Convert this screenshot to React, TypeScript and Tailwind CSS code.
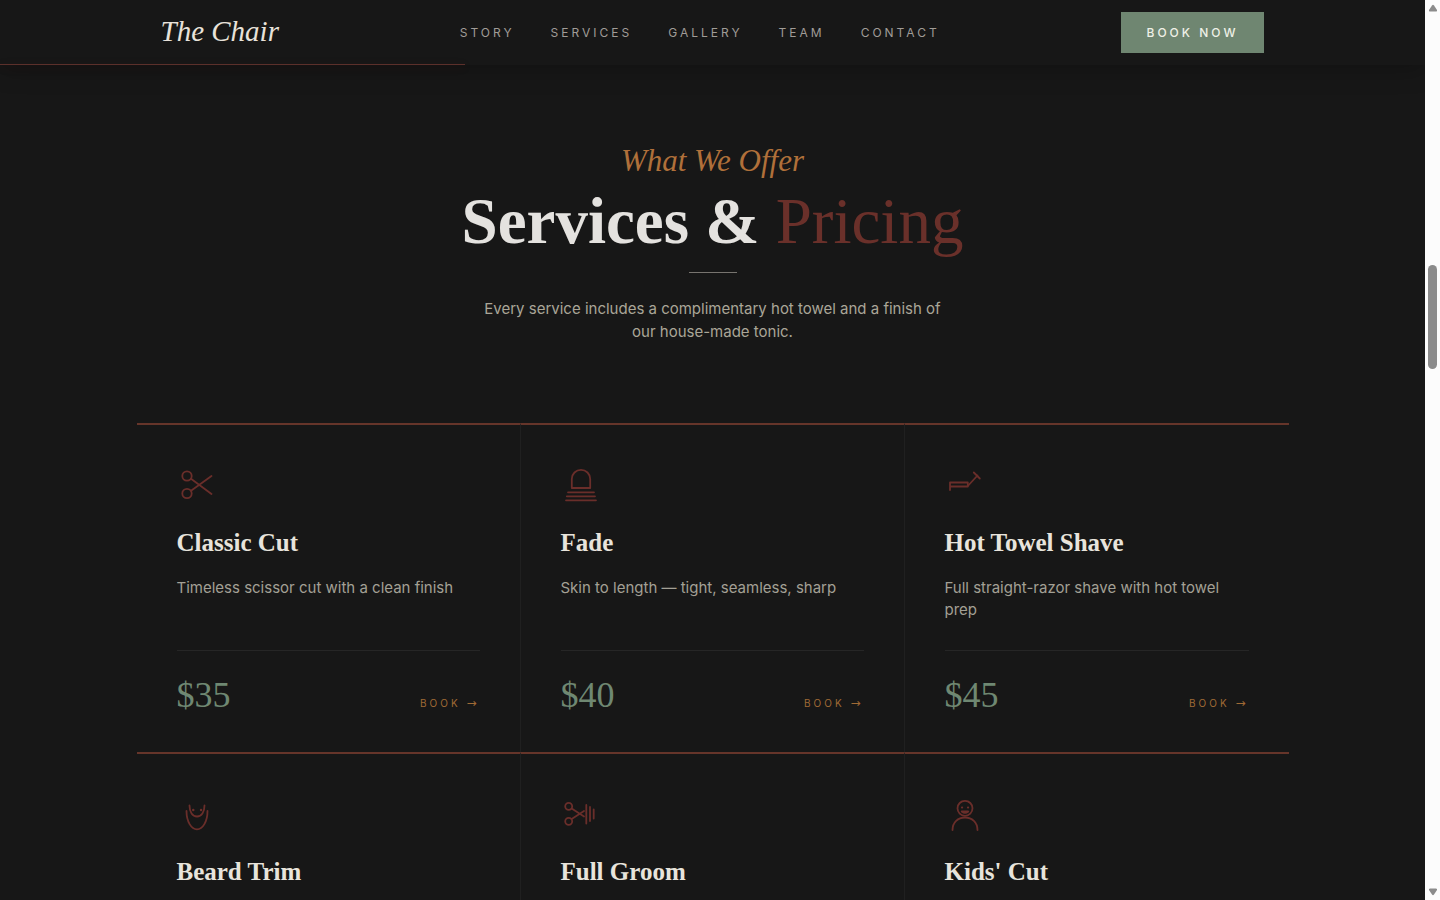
import type { ReactNode } from 'react'

type Service = {
  name: string
  icon: ReactNode
  description?: string
  price?: number
}

const navLinks = ['Story', 'Services', 'Gallery', 'Team', 'Contact']

const scrollProgress = 0.326

const services: Service[] = [
  {
    name: 'Classic Cut',
    description: 'Timeless scissor cut with a clean finish',
    price: 35,
    icon: (
      <>
        <circle cx="10" cy="11" r="4.7" />
        <circle cx="10" cy="28.5" r="4.7" />
        <path d="M14 13.7 34.5 29M14 25.8 34.5 11" />
      </>
    ),
  },
  {
    name: 'Fade',
    description: 'Skin to length — tight, seamless, sharp',
    price: 40,
    icon: (
      <>
        <path d="M10.8 23V14a9.2 9.2 0 0 1 18.4 0v9z" />
        <path d="M7 27.3h26M5.8 31.3h28.2M5 35.3h30" />
      </>
    ),
  },
  {
    name: 'Hot Towel Shave',
    description: 'Full straight-razor shave with hot towel prep',
    price: 45,
    icon: (
      <>
        <path d="M5 25v-7.5h17.8v4H5" />
        <path d="M22.8 21 32.5 10.5M28.8 7.5l6 6" />
      </>
    ),
  },
  {
    name: 'Beard Trim',
    icon: (
      <>
        <path d="M9.5 17c0 10.5 4.8 18.3 10.5 18.3S30.5 27.5 30.5 17" />
        <path d="M12.5 11.5c0 6.5 3 11 7.5 11s7.5-4.5 7.5-11" />
        <path d="M16.2 16h.1M24 16h.1" strokeWidth="2.4" />
      </>
    ),
  },
  {
    name: 'Full Groom',
    icon: (
      <>
        <circle cx="7.7" cy="12.3" r="3.5" />
        <circle cx="7.7" cy="27.3" r="3.5" />
        <path d="M10.7 14.5 23 22.5M10.7 25 23 17" />
        <path d="M25.3 11v18.5M29 13v14M32.7 15.5v9" />
      </>
    ),
  },
  {
    name: "Kids' Cut",
    icon: (
      <>
        <circle cx="20" cy="14.3" r="7.5" />
        <path d="M17 13.5h.1M23 13.5h.1" strokeWidth="2.2" />
        <path d="M16.7 17.5c2 1.6 4.6 1.6 6.6 0z" />
        <path d="M7.5 36c0-7.5 5.5-12.5 12.5-12.5S32.5 28.5 32.5 36" />
      </>
    ),
  },
]

function Header() {
  return (
    <header className="relative z-10 bg-[#171717] shadow-[0_4px_24px_rgba(0,0,0,0.25)]">
      <div className="mx-auto flex h-[65px] max-w-6xl items-center justify-between px-6">
        <a href="#top" className="pb-1 font-['Liberation_Serif',serif] text-[29px] leading-9 text-[#e8e2da] italic">
          The Chair
        </a>
        <nav className="flex items-center gap-9">
          {navLinks.map((label) => (
            <a
              key={label}
              href={`#${label.toLowerCase()}`}
              className="text-xs tracking-[3px] text-[#a09c97] uppercase"
            >
              {label}
            </a>
          ))}
        </nav>
        <button
          type="button"
          className="bg-[#6f8671] px-[26px] py-3 text-xs leading-[17px] font-medium tracking-[3px] text-[#eef0e6] uppercase"
        >
          Book Now
        </button>
      </div>
      <div
        className="absolute bottom-0 left-0 h-px bg-[#5c302b] shadow-[0_2px_8px_rgba(110,20,20,0.3)]"
        style={{ width: `${scrollProgress * 100}%` }}
      />
    </header>
  )
}

function ServiceCard({ service }: { service: Service }) {
  return (
    <article className="flex flex-col border-t-2 border-r border-t-[#66352a] border-r-[#202020] p-10 nth-[3n]:border-r-0">
      <svg
        viewBox="0 0 40 40"
        className="size-10 text-[#6a2e2a]"
        fill="none"
        stroke="currentColor"
        strokeWidth="1.8"
        strokeLinecap="round"
        strokeLinejoin="round"
        aria-hidden="true"
      >
        {service.icon}
      </svg>
      <h3 className="mt-5 font-['Liberation_Serif',serif] text-[25px] leading-9 font-bold text-[#e8e4dc]">
        {service.name}
      </h3>
      {service.description ? (
        <p className="mt-4 min-h-11 flex-1 text-[15px] leading-[22px] text-[#a3a095]">{service.description}</p>
      ) : null}
      {service.price ? (
        <div className="mt-[29px] flex items-baseline justify-between border-t border-[#262626] pt-7">
          <span className="font-['Liberation_Serif',serif] text-4xl leading-[33px] text-[#6f8872]">
            ${service.price}
          </span>
          <a href="#book" className="text-[10px] tracking-[3px] text-[#a06a35] uppercase">
            Book <span className="font-['DejaVu_Sans',sans-serif] text-xs leading-none">→</span>
          </a>
        </div>
      ) : null}
    </article>
  )
}

function Scrollbar() {
  return (
    <div className="relative flex w-[15px] shrink-0 flex-col items-center justify-between bg-[#fcfcfc] py-1 text-[#8b8b8b]">
      <svg viewBox="0 0 10 8" className="h-2 w-2.5" fill="currentColor" aria-hidden="true">
        <path d="M4 1.5Q5 0 6 1.5L9 6Q9.5 7.5 8 7.5H2Q.5 7.5 1 6z" />
      </svg>
      <div className="absolute top-[265px] h-[104px] w-[9px] rounded-full bg-[#8b8b8b]" />
      <svg viewBox="0 0 10 8" className="h-2 w-2.5 rotate-180" fill="currentColor" aria-hidden="true">
        <path d="M4 1.5Q5 0 6 1.5L9 6Q9.5 7.5 8 7.5H2Q.5 7.5 1 6z" />
      </svg>
    </div>
  )
}

export default function App() {
  return (
    <div className="flex h-screen overflow-hidden bg-[#171717] font-[Inter,sans-serif]">
      <div id="top" className="min-w-0 flex-1 overflow-hidden">
        <Header />
        <main>
          <section id="services" className="pt-20">
            <div className="flex flex-col items-center px-6 text-center">
              <p className="font-['Liberation_Serif',serif] text-[31px] leading-8 text-[#b0703a] italic">
                What We Offer
              </p>
              <h2 className="mt-1 font-['Liberation_Serif',serif] text-[65px] leading-20 font-bold text-[#e4e2df]">
                Services &amp; <span className="font-normal text-[#6a302a]">Pricing</span>
              </h2>
              <div className="mt-[11px] h-px w-12 bg-[#77746f]" />
              <p className="mt-6 max-w-[470px] text-[15px] leading-[23px] text-[#aaa698]">
                Every service includes a complimentary hot towel and a finish of our house-made tonic.
              </p>
            </div>
            <div className="mx-auto mt-20 grid max-w-6xl grid-cols-3">
              {services.map((service) => (
                <ServiceCard key={service.name} service={service} />
              ))}
            </div>
          </section>
        </main>
      </div>
      <Scrollbar />
    </div>
  )
}
